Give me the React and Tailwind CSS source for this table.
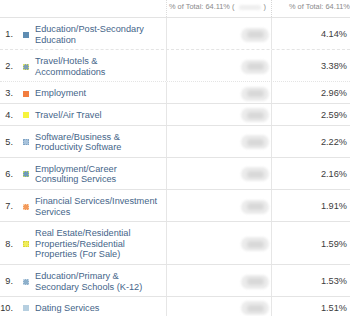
import React from 'react';

/* ── table rows (value column is redacted in the source) ── */
const ROWS = [
  { n: 1, label: 'Education/Post-Secondary Education', pct: '4.14%', sq: 'bg-[#5f8db2]', border: 'border-dashed' },
  { n: 2, label: 'Travel/Hotels & Accommodations', pct: '3.38%', sq: 'bg-[#7d9fb4] outline outline-1 outline-dotted outline-[#d9e26a] -outline-offset-1', border: 'border-dotted' },
  { n: 3, label: 'Employment', pct: '2.96%', sq: 'bg-[#f27d3f]' },
  { n: 4, label: 'Travel/Air Travel', pct: '2.59%', sq: 'bg-[#f6f43c]' },
  { n: 5, label: 'Software/Business & Productivity Software', pct: '2.22%', sq: 'bg-[#a8c3dc] outline outline-1 outline-dotted outline-[#7fa3c4] -outline-offset-1' },
  { n: 6, label: 'Employment/Career Consulting Services', pct: '2.16%', sq: 'bg-[#6d9bbb] outline outline-1 outline-dotted outline-[#b9d36a] -outline-offset-1' },
  { n: 7, label: 'Financial Services/Investment Services', pct: '1.91%', sq: 'bg-[#f39a5c] outline outline-1 outline-dotted outline-[#fbd0a8] -outline-offset-1' },
  { n: 8, label: 'Real Estate/Residential Properties/Residential Properties (For Sale)', pct: '1.59%', sq: 'bg-[#efed5a] outline outline-1 outline-dotted outline-[#d9d23a] -outline-offset-1' },
  { n: 9, label: 'Education/Primary & Secondary Schools (K-12)', pct: '1.53%', sq: 'bg-[#8db0cb] outline outline-1 outline-dotted outline-[#c4d6e6] -outline-offset-1' },
  { n: 10, label: 'Dating Services', pct: '1.51%', sq: 'bg-[#b6cfe0]' },
];

function Smudge() {
  return (
    <div className="relative w-[28px] h-[14px] rounded-full bg-[#ececec] blur-[1px] flex items-center justify-center">
      <div className="w-[17px] h-[7px] rounded-full bg-[#d8d8d8] blur-[1px]" />
    </div>
  );
}

export default function App() {
  return (
    <div
      className="w-[350px] h-[316px] overflow-hidden bg-white text-[9.2px] leading-[10.6px]"
      style={{ fontFamily: '"Liberation Sans", Arial, sans-serif' }}
    >
      {/* Header */}
      <div className="grid grid-cols-[167px_105px_1fr] h-[18px] border-b border-[#e3e3e3] text-[7.4px] text-[#8a8a8a]">
        <div className="border-r border-dotted border-[#dcdcdc]" />
        <div className="border-r border-dotted border-[#d6d6d6] flex items-center pl-[2px] pb-[2px] whitespace-nowrap overflow-hidden">
          <span>% of Total: 64.11% (</span>
          <span className="ml-[5px] w-[22px] h-[5px] rounded-full bg-[#efefef] blur-[1px]" />
          <span className="ml-auto mr-[5px]">)</span>
        </div>
        <div className="flex items-center pl-[17px] pb-[2px] whitespace-nowrap overflow-hidden">
          % of Total: 64.11%
        </div>
      </div>

      {/* Body */}
      {ROWS.map((r) => (
        <div
          key={r.n}
          className={`grid grid-cols-[167px_105px_1fr] border-b border-[#e4e4e4] ${r.border || 'border-solid'}`}
        >
          <div className="flex items-center pt-[6px] pb-[4px] border-r border-[#e6e6e6]">
            <span className="w-[13px] text-right text-[#333]">{r.n}.</span>
            <span className={`ml-[10px] w-[6px] h-[6px] shrink-0 ${r.sq}`} />
            <span className="ml-[6px] w-[125px] text-[#456589]">{r.label}</span>
          </div>
          <div className="flex items-center justify-end pr-[2px] pt-[2px] border-r border-[#e6e6e6]">
            <Smudge />
          </div>
          <div className="flex items-center justify-end pr-[3px] pt-[2px] text-[#3c3c3c]">
            {r.pct}
          </div>
        </div>
      ))}
    </div>
  );
}
